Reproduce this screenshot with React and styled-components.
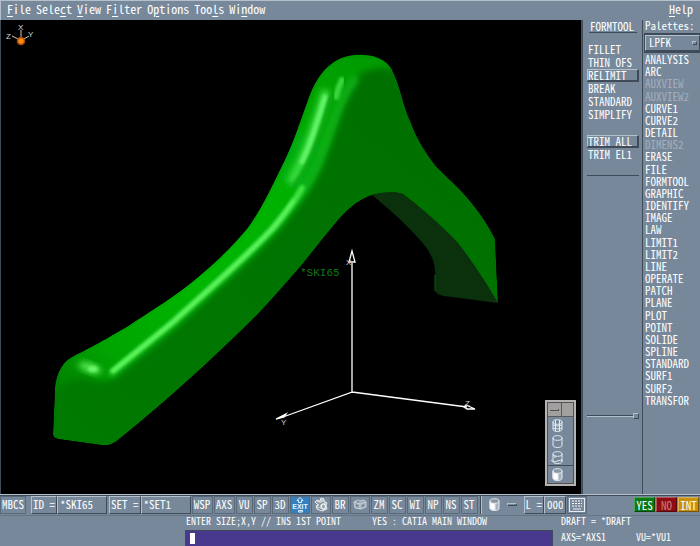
import React, { useState } from "react";
import styled, { createGlobalStyle, css } from "styled-components";

const c = {
  panel: "#77889a",
  light: "#b4c0cc",
  dark: "#3f4b59",
  text: "#ffffff",
  muted: "#a3afbc",
};

const mono = '"Noto Sans Mono CJK JP", "Noto Sans Mono CJK SC", "Liberation Mono", monospace';

const GlobalStyle = createGlobalStyle`
  *, *::before, *::after { box-sizing: border-box; }
  body { margin: 0; background: ${c.panel}; }
  button, input, select {
    font: inherit; color: inherit; margin: 0; padding: 0;
    border: 0; border-radius: 0; background: none;
  }
`;

const raised = css`
  border: 1px solid;
  border-color: ${c.light} ${c.dark} ${c.dark} ${c.light};
`;

const Shell = styled.div`
  display: grid;
  grid-template-rows: auto 1fr auto auto;
  min-height: 100vh;
  background: ${c.panel};
  color: ${c.text};
  font-family: ${mono};
  font-size: 11px;
  font-weight: 500;
  line-height: 12px;
`;

const MenuBar = styled.nav`
  display: flex;
  gap: 5px;
  height: 20px;
  padding: 0 7px 4px 6px;
  border-top: 1px solid ${c.light};
  border-left: 1px solid ${c.light};
  align-items: center;
  font-size: 12px;
`;

const MenuButton = styled.button`
  line-height: 14px;
  margin-left: ${(p) => (p.$end ? "auto" : "0")};
  text-underline-offset: 2px;
`;

const Workspace = styled.main`
  display: grid;
  grid-template-columns: minmax(0, 1fr) 61px 57px;
`;

const Viewport = styled.section`
  position: relative;
  display: flex;
  background: #000;
  border-left: 1px solid ${c.dark};
  border-right: 1px solid #55504f;
`;

const Scene = styled.svg`
  flex: 1;
  width: 100%;
  min-width: 0;
`;

const ToolPanel = styled.aside`
  display: flex;
  flex-direction: column;
  padding: 0 3px 0 4px;
  border-left: 1px solid ${c.dark};
  border-right: 1px solid ${c.dark};
`;

const PanelTitle = styled.h2`
  margin: 0 2px 10px 2px;
  padding: 0 0 0 1px;
  height: 13px;
  font: inherit;
  border-bottom: 1px solid ${c.dark};
`;

const ToolGroup = styled.div`
  display: flex;
  flex-direction: column;
  gap: 1px;
  margin-bottom: 15px;
`;

const ToolButton = styled.button`
  height: 12px;
  line-height: 10px;
  text-align: left;
  border: 1px solid transparent;
  ${(p) => p["aria-pressed"] && css`
    ${raised}
    border-right-width: 2px;
    box-shadow: 0 1px ${c.dark};
  `}
`;

const Rule = styled.hr`
  width: 100%;
  margin: 0;
  border: 0;
  border-top: 1px solid ${c.dark};
`;

const PanelSlider = styled.input`
  appearance: none;
  width: 100%;
  height: 6px;
  margin: auto 0 75px;
  background: linear-gradient(${c.dark}, ${c.dark}) 0 2px / 100% 1px no-repeat,
    linear-gradient(${c.light}, ${c.light}) 0 3px / 100% 1px no-repeat;
  &::-webkit-slider-thumb {
    appearance: none;
    width: 6px;
    height: 6px;
    background: ${c.panel};
    ${raised}
  }
`;

const PalettePanel = styled.aside`
  display: flex;
  flex-direction: column;
  padding: 0 0 88px 1px;
`;

const PaletteLabel = styled.label`
  height: 14px;
  padding-left: 1px;
  line-height: 11px;
  border-bottom: 1px solid ${c.dark};
`;

const SelectBox = styled.div`
  display: flex;
  align-items: center;
  height: 16px;
  margin: 1px 0 1px 1px;
  padding: 0 2px 0 3px;
  outline: 1px solid ${c.dark};
  ${raised}
`;

const PaletteSelect = styled.select`
  appearance: none;
  flex: 1;
  min-width: 0;
  height: 14px;
  padding-bottom: 2px;
`;

const SelectMark = styled.span`
  width: 5px;
  height: 4px;
  ${raised}
`;

const PaletteList = styled.ul`
  flex: 1;
  display: flex;
  flex-direction: column;
  justify-content: space-between;
  margin: 0;
  padding: 0 0 0 1px;
  list-style: none;
`;

const PaletteItem = styled.li`
  display: flex;
  height: 12px;
`;

const PaletteButton = styled.button`
  line-height: 12px;
  &:disabled { color: ${c.muted}; }
`;

const FloatPalette = styled.div`
  position: absolute;
  right: 5px;
  bottom: 8px;
  width: 31px;
  border: 2px solid #b3b3b3;
  outline: 1px solid #55504f;
  outline-offset: -3px;
  padding: 1px;
  background: ${c.panel};
`;

const FloatHeader = styled.div`
  display: grid;
  grid-template-columns: 14px 1fr;
  height: 14px;
  background: #a39f9f;
  border-bottom: 1px solid #5d5858;
`;

const FloatHandle = styled.button`
  border-right: 1px solid #5d5858;
  display: grid;
  place-items: center;
  &::before { content: ""; width: 9px; height: 2px; border: 1px solid #555; border-width: 0 1px 1px 0; }
`;

const FloatButton = styled.button`
  display: block;
  width: 100%;
  height: 16px;
  padding-left: 2px;
  ${(p) => p["aria-pressed"] && css`border-top: 1px solid ${c.dark}; height: 18px;`}
  svg { display: block; }
`;

const Toolbar = styled.div`
  display: flex;
  align-items: center;
  gap: 1px;
  height: 22px;
  padding: 0 1px 1px 0;
  border-top: 1px solid ${c.light};
  border-bottom: 1px solid #667687;
  box-shadow: inset 0 1px ${c.dark};
`;

const widths = { icon: 20, s: 17, m: 21, l: 26 };

const BarButton = styled.button`
  display: grid;
  place-items: center;
  flex: none;
  width: ${(p) => widths[p.$size || "s"]}px;
  height: 18px;
  line-height: 14px;
  padding-bottom: ${(p) => (p.$size === "icon" ? 0 : 1)}px;
  background: ${(p) => (p.$active ? "#347fc0" : "transparent")};
  outline: 1px solid #5a6979;
  outline-offset: -1px;
  ${raised}
`;

const Field = styled.div`
  display: flex;
  margin-left: ${(p) => (p.$spaced ? 4 : 1)}px;
`;

const FieldLabel = styled.label`
  height: 18px;
  line-height: 15px;
  padding: 0 1px;
  white-space: pre;
  ${raised}
`;

const FieldInput = styled.input`
  width: ${(p) => (p.$short ? 22 : 50)}px;
  height: 18px;
  padding: 0 2px 1px;
  ${raised}
`;

const Separator = styled.span`
  width: 2px;
  height: 18px;
  margin: 0 4px 0 1px;
  border-left: 1px solid ${c.dark};
  border-right: 1px solid ${c.light};
`;

const Dash = styled.span`
  width: 10px;
  height: 3px;
  margin: 0 5px;
  ${raised}
`;

const Answers = styled.div`
  display: flex;
  gap: 1px;
  margin-left: auto;
`;

const answerColors = { yes: "#0a7a12", no: "#8f0d12", int: "#c8900c" };

const AnswerButton = styled.button`
  width: 21px;
  height: 15px;
  line-height: 12px;
  background: ${(p) => answerColors[p.$kind]};
  color: ${(p) => (p.$kind === "no" ? "#c98080" : "#fff")};
  border: 1px solid;
  border-color: rgba(255, 255, 255, 0.3) rgba(0, 0, 0, 0.4) rgba(0, 0, 0, 0.4) rgba(255, 255, 255, 0.3);
`;

const StatusArea = styled.footer`
  display: grid;
  grid-template-columns: 185px minmax(0, 1fr) 147px;
  height: 31px;
  font-size: 10px;
`;

const PromptColumn = styled.div`
  grid-column: 2;
  display: flex;
  flex-direction: column;
  justify-content: space-between;
`;

const PromptLabel = styled.label`
  display: flex;
  gap: 31px;
  padding-left: 1px;
  line-height: 10px;
  white-space: nowrap;
`;

const PromptField = styled.div`
  display: flex;
  align-items: center;
  height: 17px;
  padding-left: 4px;
  border: 1px solid ${c.dark};
  background: #48388e;
`;

const Caret = styled.span`
  width: 5px;
  height: 11px;
  background: #fff;
`;

const PromptInput = styled.input`
  flex: 1;
  min-width: 0;
  outline: none;
`;

const Readout = styled.div`
  display: grid;
  grid-template-columns: 75px 1fr;
  align-content: space-between;
  padding: 0 0 5px 8px;
  line-height: 10px;
`;

const ReadoutWide = styled.span`
  grid-column: 1 / -1;
`;

const AxisText = styled.text`
  font-family: "Liberation Sans", sans-serif;
  font-size: 8px;
  font-weight: 400;
  fill: #d8d8d8;
`;

const PartText = styled.text`
  font-family: "Liberation Mono", monospace;
  font-size: 11px;
  font-weight: 400;
  fill: #0b7a16;
`;

const BODY =
  "M53 434 L55 388 C57 370 64 361 74 356 C92 347 103 341 130 325 C160 305 178 295 203 273 C222 257 236 242 247 229 C262 209 272 186 284 162 C293 144 300 122 307 103 C314 82 322 70 334 62 C343 56 354 54 365 55 C377 56 385 60 391 68 C400 83 402 104 411 123 C416 137 425 152 435 165 C443 174 454 183 463 193 C477 208 489 226 495 239 L498 303 C486 283 473 262 457 242 C438 222 420 207 403 194 C396 191 381 192 372 195 C358 200 349 208 339 219 C326 234 314 250 300 267 C285 284 272 299 257 315 C241 331 224 347 207 363 C180 388 147 417 118 440 C113 444 109 446 101 445 L58 439 Q53 438 53 434 Z";

const TOP =
  "M55 388 C57 370 64 361 74 356 C92 347 103 341 130 325 C160 305 178 295 203 273 C222 257 236 242 247 229 C262 209 272 186 284 162 C293 144 300 122 307 103 C314 82 322 70 334 62 C343 56 354 54 365 55 C377 56 385 60 391 66 C375 63 359 70 351 79 C339 93 334 124 323 150 C314 178 300 197 274 228 C240 263 210 289 173 322 L112 372 C108 376 106 380 101 380 C88 375 68 372 56 390 Z";

function Model() {
  return (
    <Scene viewBox="1 20 580 474" role="img" aria-label="Shaded solid *SKI65">
      <defs>
        <linearGradient id="side" x1="0" y1="1" x2="0.9" y2="0">
          <stop offset="0" stopColor="#007a00" />
          <stop offset="0.5" stopColor="#007400" />
          <stop offset="1" stopColor="#007000" />
        </linearGradient>
        <linearGradient id="top" gradientUnits="userSpaceOnUse" x1="70" y1="400" x2="350" y2="55">
          <stop offset="0" stopColor="#008000" />
          <stop offset="0.14" stopColor="#00a400" />
          <stop offset="0.4" stopColor="#00b800" />
          <stop offset="0.75" stopColor="#00ae08" />
          <stop offset="1" stopColor="#009c00" />
        </linearGradient>
        <clipPath id="body"><path d={BODY} /></clipPath>
        <filter id="b1" x="-20%" y="-20%" width="140%" height="140%"><feGaussianBlur stdDeviation="1.5" /></filter>
        <filter id="b2" x="-30%" y="-30%" width="160%" height="160%"><feGaussianBlur stdDeviation="3" /></filter>
      </defs>

      <path d="M372 195 C388 208 405 223 420 240 C431 252 436 263 435 276 L435 291 Q437 295 444 296 L498 303 L470 240 L400 188 Z" fill="#0a300c" />
      <path d="M435 275 V291" stroke="#0b5a10" />

      <g clipPath="url(#body)">
        <path d={BODY} fill="url(#side)" />
        <path d={TOP} fill="url(#top)" stroke="url(#top)" strokeWidth="5" filter="url(#b2)" />
        <path d="M105 450 V378" stroke="#009a10" strokeWidth="9" filter="url(#b2)" />
        <g fill="none" strokeLinecap="round">
          <path d="M112 374 L173 324 C210 290 241 263 274 228 C300 197 314 178 323 150 C334 122 339 100 354 80" stroke="#10b014" strokeWidth="9" filter="url(#b2)" />
          <path d="M292 180 C304 160 314 132 325 94" stroke="#3ade40" strokeWidth="9" filter="url(#b2)" />
          <path d="M302 162 C311 144 318 120 325 97" stroke="#66f46c" strokeWidth="5" filter="url(#b1)" />
          <path d="M113 371 L173 322 C210 288 240 263 273 228 C285 214 295 201 302 188" stroke="#3fe23f" strokeWidth="6" filter="url(#b1)" />
          <path d="M113 371 L173 322 C210 288 240 263 273 228 C281 218 288 209 293 201" stroke="#62f862" strokeWidth="3" filter="url(#b1)" />
          <path d="M336 97 Q338 88 342 80" stroke="#3ad840" strokeWidth="6" filter="url(#b1)" />
          <path d="M294 186 C312 162 321 137 331 97" stroke="#0ca014" strokeWidth="3" filter="url(#b1)" />
        </g>
        <ellipse cx="90" cy="368" rx="12" ry="5" fill="#50e850" filter="url(#b2)" transform="rotate(20 90 368)" />
        <ellipse cx="93" cy="369" rx="5" ry="3" fill="#70f870" filter="url(#b1)" />
      </g>

      <PartText x="300" y="276">*SKI65</PartText>

      <g stroke="#fff" strokeWidth="1.3" fill="none">
        <path d="M352 263 V392 L283 417 M352 392 L467 407" />
        <path d="M352 251 L349 262 H355 Z" />
        <path d="M276 419 L286 414 L284 417 Z" fill="#fff" />
        <path d="M475 409 L466 405 L464 407 L467 409 Z" />
      </g>
      <AxisText x="346" y="265">X</AxisText>
      <AxisText x="281" y="425">Y</AxisText>
      <AxisText x="465" y="406">Z</AxisText>

      <path d="M21 37 V30 M18 39 L12 36 M24 39 L29 36" stroke="#ccc" />
      <circle cx="21" cy="41" r="3.5" fill="#ff8a18" stroke="#a84a04" strokeWidth="1.5" />
      <AxisText x="18" y="30">X</AxisText>
      <AxisText x="6" y="39">Z</AxisText>
      <AxisText x="28" y="37">Y</AxisText>
    </Scene>
  );
}

function Cylinder({ kind }) {
  return (
    <svg width="14" height="15" viewBox="0 0 14 15" fill="none" stroke="#e4ebf2" aria-hidden="true">
      <path d="M3 4 V11 Q3 13.500 7.500 13.500 Q12 13.500 12 11 V4" fill={kind === "solid" ? "#a8b3bd" : "none"} />
      {kind === "solid" && <path d="M3 4 H8 V13 Q3 13 3 11 Z" fill="#fff" />}
      <ellipse cx="7.500" cy="4" rx="4.500" ry="2.300" fill={kind === "solid" ? "#8b98a4" : "none"} />
      {kind === "wire" && <path d="M5.500 2 V13 M9.500 2 V13 M3 7 Q7.500 9 12 7 M3 10 Q7.500 12 12 10" />}
      {kind === "edge" && <path d="M1 10 L4 12 L11 10 M5 5 V8 M11 10 L13 11" />}
    </svg>
  );
}

function ExitIcon() {
  return (
    <svg width="18" height="16" viewBox="0 0 18 16" fill="none" stroke="#e6f4ff" aria-hidden="true">
      <path d="M9 0.500 L12 3.500 H10.500 V5.500 H7.500 V3.500 H6 Z" />
      <text x="9" y="12" textAnchor="middle" fontSize="7" fontWeight="700" fontFamily="Liberation Sans, sans-serif" fill="#e6f4ff" stroke="none">EXIT</text>
      <path d="M7.500 13.500 H11.500 V15 H7.500 Z" />
    </svg>
  );
}

function PartIcon() {
  return (
    <svg width="16" height="15" viewBox="0 0 16 15" fill="none" aria-hidden="true">
      <path d="M2 5 L4 3 L7 4 L8 1 L11 2 L11 4 L14 6 L13 8 L14 12 L9 14 L4 12 L3 9 L5 8 Z" fill="#c3ccd3" stroke="#e0e6eb" />
      <path d="M3 5 L7 7 L11 5 M7 7 L6 10 M5 11 L9 13" stroke="#75838f" />
      <ellipse cx="10.500" cy="9.500" rx="2" ry="2.500" fill="#95a1ac" stroke="#fff" />
    </svg>
  );
}

function BlocksIcon() {
  return (
    <svg width="16" height="15" viewBox="0 0 16 15" fill="#9da9b4" stroke="#c8d1d9" aria-hidden="true">
      <path d="M2 5 L6 3 L8 4 L12 3 L14 5 V10 L9 12 L3 11 Z" />
      <path d="M2 5 L8 7 L14 5 M8 7 V12" fill="none" />
      <path d="M4 8 L6 9 M10 9 L12 8 M5 5 L7 4" fill="none" stroke="#5f6d7a" />
    </svg>
  );
}

function KeypadIcon() {
  return (
    <svg width="16" height="14" viewBox="0 0 16 14" fill="none" aria-hidden="true">
      <rect x="0.500" y="0.500" width="15" height="13" stroke="#e8edf2" />
      <path d="M3 3 H13 M3 5.500 H13 M3 8 H13" stroke="#fff" strokeDasharray="2 1" />
      <path d="M4 11 H12" stroke="#e8edf2" />
    </svg>
  );
}

function Mnemonic({ text, at }) {
  return (
    <>
      {text.slice(0, at)}
      <u>{text[at]}</u>
      {text.slice(at + 1)}
    </>
  );
}

const menus = [
  ["File", 0], ["Select", 4], ["View", 0], ["Filter", 1], ["Options", 1], ["Tools", 3], ["Window", 2],
];
const tools = ["FILLET", "THIN OFS", "RELIMIT", "BREAK", "STANDARD", "SIMPLIFY"];
const trims = ["TRIM ALL", "TRIM EL1"];
const functions = [
  "ANALYSIS", "ARC", "AUXVIEW", "AUXVIEW2", "CURVE1", "CURVE2", "DETAIL", "DIMENS2", "ERASE", "FILE",
  "FORMTOOL", "GRAPHIC", "IDENTIFY", "IMAGE", "LAW", "LIMIT1", "LIMIT2", "LINE", "OPERATE", "PATCH",
  "PLANE", "PLOT", "POINT", "SOLIDE", "SPLINE", "STANDARD", "SURF1", "SURF2", "TRANSFOR",
];
const unavailable = ["AUXVIEW", "AUXVIEW2", "DIMENS2"];
const displayModes = ["wire", "outline", "edge", "solid"];

export default function App() {
  const [tool, setTool] = useState("RELIMIT");
  const [trim, setTrim] = useState("TRIM ALL");
  const [mode, setMode] = useState("solid");

  return (
    <Shell>
      <GlobalStyle />
      <MenuBar aria-label="Main menu">
        {menus.map(([text, at]) => (
          <MenuButton key={text}><Mnemonic text={text} at={at} /></MenuButton>
        ))}
        <MenuButton $end><Mnemonic text="Help" at={0} /></MenuButton>
      </MenuBar>

      <Workspace>
        <Viewport>
          <Model />
          <FloatPalette role="group" aria-label="Display mode">
            <FloatHeader><FloatHandle aria-label="Palette menu" /></FloatHeader>
            {displayModes.map((m) => (
              <FloatButton key={m} aria-label={m} aria-pressed={mode === m} onClick={() => setMode(m)}>
                <Cylinder kind={m} />
              </FloatButton>
            ))}
          </FloatPalette>
        </Viewport>

        <ToolPanel>
          <PanelTitle>FORMTOOL</PanelTitle>
          <ToolGroup>
            {tools.map((t) => (
              <ToolButton key={t} aria-pressed={tool === t} onClick={() => setTool(t)}>{t}</ToolButton>
            ))}
          </ToolGroup>
          <ToolGroup>
            {trims.map((t) => (
              <ToolButton key={t} aria-pressed={trim === t} onClick={() => setTrim(t)}>{t}</ToolButton>
            ))}
          </ToolGroup>
          <Rule />
          <PanelSlider type="range" defaultValue="100" aria-label="Panel split" />
        </ToolPanel>

        <PalettePanel>
          <PaletteLabel htmlFor="palette">Palettes:</PaletteLabel>
          <SelectBox>
            <PaletteSelect id="palette"><option>LPFK</option></PaletteSelect>
            <SelectMark />
          </SelectBox>
          <Rule />
          <PaletteList>
            {functions.map((f) => (
              <PaletteItem key={f}>
                <PaletteButton disabled={unavailable.includes(f)}>{f}</PaletteButton>
              </PaletteItem>
            ))}
          </PaletteList>
        </PalettePanel>
      </Workspace>

      <Toolbar>
        <BarButton $size="l">MBCS</BarButton>
        <Field $spaced>
          <FieldLabel htmlFor="id">ID =</FieldLabel>
          <FieldInput id="id" defaultValue="*SKI65" />
        </Field>
        <Field>
          <FieldLabel htmlFor="set">SET =</FieldLabel>
          <FieldInput id="set" defaultValue="*SET1" />
        </Field>
        <BarButton $size="m">WSP</BarButton>
        <BarButton $size="m">AXS</BarButton>
        {["VU", "SP", "3D"].map((t) => <BarButton key={t}>{t}</BarButton>)}
        <BarButton $size="icon" $active aria-label="Exit"><ExitIcon /></BarButton>
        <BarButton $size="icon" aria-label="Part"><PartIcon /></BarButton>
        <BarButton>BR</BarButton>
        <BarButton $size="icon" aria-label="Assembly"><BlocksIcon /></BarButton>
        {["ZM", "SC", "WI", "NP", "NS", "ST"].map((t) => <BarButton key={t}>{t}</BarButton>)}
        <Separator />
        <Cylinder kind="solid" />
        <Dash />
        <Field>
          <FieldLabel htmlFor="layer">L =</FieldLabel>
          <FieldInput id="layer" $short defaultValue="000" />
        </Field>
        <BarButton $size="icon" aria-label="Keypad"><KeypadIcon /></BarButton>
        <Answers>
          <AnswerButton $kind="yes">YES</AnswerButton>
          <AnswerButton $kind="no">NO</AnswerButton>
          <AnswerButton $kind="int">INT</AnswerButton>
        </Answers>
      </Toolbar>

      <StatusArea>
        <PromptColumn>
          <PromptLabel htmlFor="prompt">
            <span>ENTER SIZE;X,Y // INS 1ST POINT</span>
            <span>YES : CATIA MAIN WINDOW</span>
          </PromptLabel>
          <PromptField>
            <Caret />
            <PromptInput id="prompt" />
          </PromptField>
        </PromptColumn>
        <Readout>
          <ReadoutWide>DRAFT = *DRAFT</ReadoutWide>
          <span>AXS=*AXS1</span>
          <span>VU=*VU1</span>
        </Readout>
      </StatusArea>
    </Shell>
  );
}
